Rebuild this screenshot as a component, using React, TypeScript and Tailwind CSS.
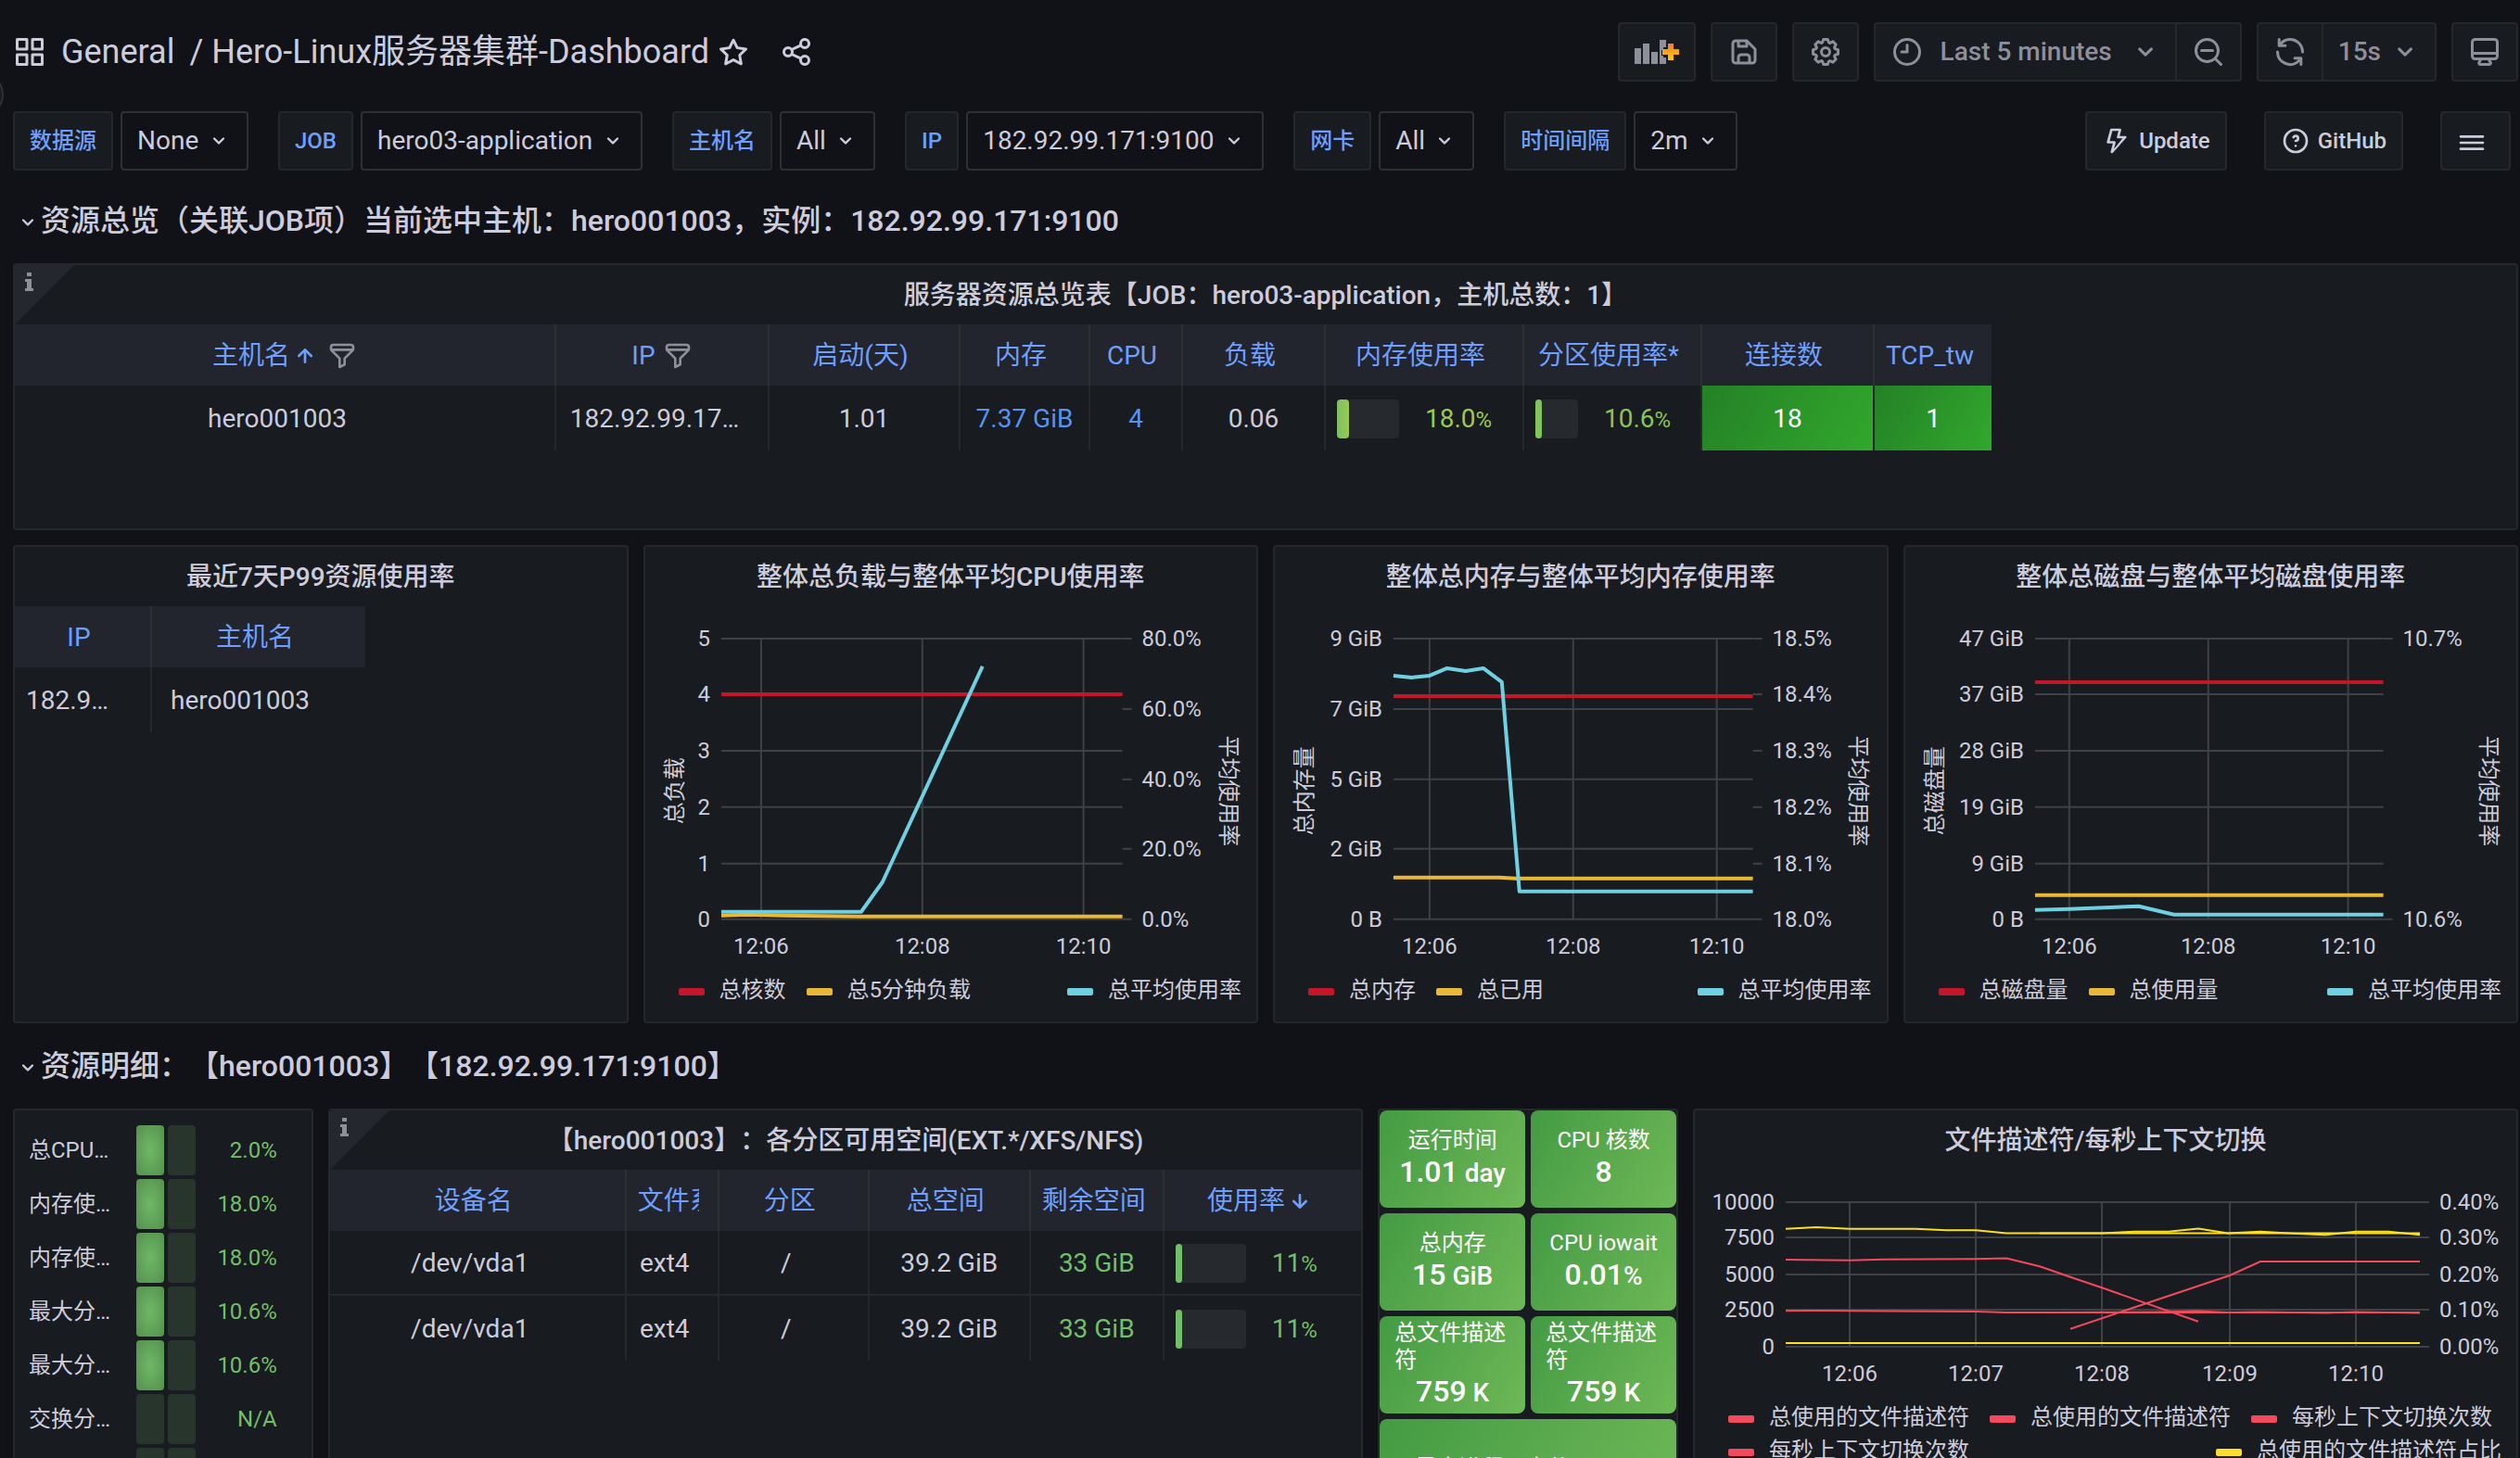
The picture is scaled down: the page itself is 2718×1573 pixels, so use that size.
import type { ReactNode } from "react";

const ICONS = {
  apps: "M10,13H3a1,1,0,0,0-1,1v7a1,1,0,0,0,1,1h7a1,1,0,0,0,1-1V14A1,1,0,0,0,10,13ZM9,20H4V15H9ZM21,2H14a1,1,0,0,0-1,1v7a1,1,0,0,0,1,1h7a1,1,0,0,0,1-1V3A1,1,0,0,0,21,2ZM20,9H15V4h5Zm1,4H14a1,1,0,0,0-1,1v7a1,1,0,0,0,1,1h7a1,1,0,0,0,1-1V14A1,1,0,0,0,21,13Zm-1,7H15V15h5ZM10,2H3A1,1,0,0,0,2,3v7a1,1,0,0,0,1,1h7a1,1,0,0,0,1-1V3A1,1,0,0,0,10,2ZM9,9H4V4H9Z",
  star: "M22,9.67A1,1,0,0,0,21.14,9l-5.69-.83L12.9,3a1,1,0,0,0-1.8,0L8.55,8.16,2.86,9a1,1,0,0,0-.81.68,1,1,0,0,0,.25,1l4.13,4-1,5.68A1,1,0,0,0,6.9,21.44L12,18.77l5.1,2.67a.93.93,0,0,0,.46.12,1,1,0,0,0,.59-.19,1,1,0,0,0,.4-1l-1-5.68,4.13-4A1,1,0,0,0,22,9.67Zm-6.15,4a1,1,0,0,0-.29.88l.72,4.2-3.76-2a1.06,1.06,0,0,0-.94,0l-3.76,2,.72-4.2a1,1,0,0,0-.29-.88l-3-3,4.21-.61a1,1,0,0,0,.76-.55L12,5.7l1.88,3.82a1,1,0,0,0,.76.55l4.21.61Z",
  share: "M18,14a4,4,0,0,0-3.08,1.48l-5.1-2.35a3.64,3.64,0,0,0,0-2.26l5.1-2.35A4,4,0,1,0,14,6a4.17,4.17,0,0,0,.07.71L8.79,9.14a4,4,0,1,0,0,5.72l5.28,2.43A4.17,4.17,0,0,0,14,18a4,4,0,1,0,4-4ZM18,4a2,2,0,1,1-2,2A2,2,0,0,1,18,4ZM6,14a2,2,0,1,1,2-2A2,2,0,0,1,6,14Zm12,6a2,2,0,1,1,2-2A2,2,0,0,1,18,20Z",
  save: "m20.71 9.29-6-6a1 1 0 0 0-.32-.21A1.09 1.09 0 0 0 14 3H6a3 3 0 0 0-3 3v12a3 3 0 0 0 3 3h12a3 3 0 0 0 3-3v-8a1 1 0 0 0-.29-.71ZM9 5h4v2H9Zm6 14H9v-3a1 1 0 0 1 1-1h4a1 1 0 0 1 1 1Zm4-1a1 1 0 0 1-1 1h-1v-3a3 3 0 0 0-3-3h-4a3 3 0 0 0-3 3v3H6a1 1 0 0 1-1-1V6a1 1 0 0 1 1-1h1v3a1 1 0 0 0 1 1h6a1 1 0 0 0 1-1V6.41l4 4Z",
  cog: "M21.32,9.55l-1.89-.63.89-1.78A1,1,0,0,0,20.13,6L18,3.87a1,1,0,0,0-1.15-.19l-1.78.89-.63-1.89A1,1,0,0,0,13.5,2h-3a1,1,0,0,0-.95.68L8.92,4.57,7.14,3.68A1,1,0,0,0,6,3.87L3.87,6a1,1,0,0,0-.19,1.15l.89,1.78-1.89.63A1,1,0,0,0,2,10.5v3a1,1,0,0,0,.68.95l1.89.63-.89,1.78A1,1,0,0,0,3.87,18L6,20.13a1,1,0,0,0,1.15.19l1.78-.89.63,1.89a1,1,0,0,0,.95.68h3a1,1,0,0,0,.95-.68l.63-1.89,1.78.89A1,1,0,0,0,18,20.13L20.13,18a1,1,0,0,0,.19-1.15l-.89-1.78,1.89-.63A1,1,0,0,0,22,13.5v-3A1,1,0,0,0,21.32,9.55ZM20,12.78l-1.2.4A2,2,0,0,0,17.64,16l.57,1.14-1.1,1.1L16,17.64a2,2,0,0,0-2.79,1.16l-.4,1.2H11.22l-.4-1.2A2,2,0,0,0,8,17.64l-1.14.57-1.1-1.1L6.36,16A2,2,0,0,0,5.2,13.18L4,12.78V11.22l1.2-.4A2,2,0,0,0,6.36,8L5.79,6.89l1.1-1.1L8,6.36A2,2,0,0,0,10.82,5.2l.4-1.2h1.56l.4,1.2A2,2,0,0,0,16,6.36l1.14-.57,1.1,1.1L17.64,8a2,2,0,0,0,1.16,2.79l1.2.4ZM12,8a4,4,0,1,0,4,4A4,4,0,0,0,12,8Zm0,6a2,2,0,1,1,2-2A2,2,0,0,1,12,14Z",
  clock: "M12,2A10,10,0,1,0,22,12,10,10,0,0,0,12,2Zm0,18a8,8,0,1,1,8-8A8,8,0,0,1,12,20ZM12,6a1,1,0,0,0-1,1v4H8a1,1,0,0,0,0,2h4a1,1,0,0,0,1-1V7A1,1,0,0,0,12,6Z",
  zoomOut: "M21.71,20.29,18,16.61A9,9,0,1,0,16.61,18l3.68,3.68a1,1,0,0,0,1.42,0A1,1,0,0,0,21.71,20.29ZM11,18a7,7,0,1,1,7-7A7,7,0,0,1,11,18Zm4-8H7a1,1,0,0,0,0,2h8a1,1,0,0,0,0-2Z",
  sync: "M19.91,15.51H15.38a1,1,0,0,0,0,2h2.4A8,8,0,0,1,4,12a1,1,0,0,0-2,0,10,10,0,0,0,16.88,7.23V21a1,1,0,0,0,2,0V16.5A1,1,0,0,0,19.91,15.51ZM12,2A10,10,0,0,0,5.12,4.77V3a1,1,0,0,0-2,0V7.5a1,1,0,0,0,1,1h4.5a1,1,0,0,0,0-2H6.22A8,8,0,0,1,20,12a1,1,0,0,0,2,0A10,10,0,0,0,12,2Z",
  monitor: "M19,2H5A3,3,0,0,0,2,5V15a3,3,0,0,0,3,3H7.64l-.58,1a2,2,0,0,0,0,2,2,2,0,0,0,1.75,1h6.46A2,2,0,0,0,17,21a2,2,0,0,0,0-2l-.59-1H19a3,3,0,0,0,3-3V5A3,3,0,0,0,19,2ZM8.77,20,10,18H14l1.2,2ZM20,15a1,1,0,0,1-1,1H5a1,1,0,0,1-1-1V14H20Zm0-3H4V5A1,1,0,0,1,5,4H19a1,1,0,0,1,1,1Z",
  bolt: "M19.87,8.6A1,1,0,0,0,19,8H14.42l1.27-4.74a1,1,0,0,0-.17-.87A1,1,0,0,0,14.72,2h-7a1,1,0,0,0-1,.74L4,12.74a1,1,0,0,0,.17.87,1,1,0,0,0,.8.39H8.89L7.08,20.74a1,1,0,0,0,1.71.93L19.7,9.63A1,1,0,0,0,19.87,8.6ZM9.79,18.61l1.36-5.1a1,1,0,0,0-.17-.86,1,1,0,0,0-.79-.4H6.35L8.49,4h4.92L12.15,8.75a1,1,0,0,0,1,1.25h3.57Z",
  question: "M11.29,15.29a1.58,1.58,0,0,0-.12.15.76.76,0,0,0-.09.18.64.64,0,0,0-.06.18,1.36,1.36,0,0,0,0,.2.84.84,0,0,0,.08.38.9.9,0,0,0,.54.54.94.94,0,0,0,.76,0,.9.9,0,0,0,.54-.54A1,1,0,0,0,13,16a1,1,0,0,0-.29-.71A1,1,0,0,0,11.29,15.29ZM12,2A10,10,0,1,0,22,12,10,10,0,0,0,12,2Zm0,18a8,8,0,1,1,8-8A8,8,0,0,1,12,20ZM12,7A3,3,0,0,0,9.4,8.5a1,1,0,1,0,1.73,1A1,1,0,0,1,12,9a1,1,0,0,1,0,2,1,1,0,1,0,0,2,3,3,0,0,0,0-6Z",
  bars: "M3,8H21a1,1,0,0,0,0-2H3A1,1,0,0,0,3,8Zm18,8H3a1,1,0,0,0,0,2H21a1,1,0,0,0,0-2Zm0-5H3a1,1,0,0,0,0,2H21a1,1,0,0,0,0-2Z",
  angleDown: "M17,9.17a1,1,0,0,0-1.41,0L12,12.71,8.46,9.17a1,1,0,0,0-1.41,0,1,1,0,0,0,0,1.42l4.24,4.24a1,1,0,0,0,1.42,0L17,10.59A1,1,0,0,0,17,9.17Z",
  arrowUp: "M17.71,11.29l-5-5a1,1,0,0,0-.33-.21,1,1,0,0,0-.76,0,1,1,0,0,0-.33.21l-5,5a1,1,0,0,0,1.42,1.42L11,9.41V17a1,1,0,0,0,2,0V9.41l3.29,3.3a1,1,0,0,0,1.42,0A1,1,0,0,0,17.71,11.29Z",
  filter: "M19,2H5A3,3,0,0,0,2,5V6.17a3,3,0,0,0,.25,1.2l0,.06a2.81,2.81,0,0,0,.59.86L9,14.41V21a1,1,0,0,0,.47.85A1,1,0,0,0,10,22a1,1,0,0,0,.45-.11l4-2A1,1,0,0,0,15,19V14.41l6.12-6.12a2.81,2.81,0,0,0,.59-.86l0-.06A3,3,0,0,0,22,6.17V5A3,3,0,0,0,19,2ZM13.29,13.29A1,1,0,0,0,13,14v4.38l-2,1V14a1,1,0,0,0-.29-.71L5.41,8H18.59ZM20,6H4V5A1,1,0,0,1,5,4H19a1,1,0,0,1,1,1Z",
};

function Icon({ name, className }: { name: keyof typeof ICONS; className: string }) {
  return (
    <svg viewBox="0 0 24 24" fill="currentColor" aria-hidden="true" className={`shrink-0 ${className}`}>
      <path d={ICONS[name]} />
    </svg>
  );
}

function PanelAddIcon() {
  return (
    <svg viewBox="0 0 48 28" aria-hidden="true" className="h-7 w-12 shrink-0">
      <defs>
        <linearGradient id="plus" x1="0" y1="0" x2="0" y2="1">
          <stop offset="0" stopColor="#f47b35" />
          <stop offset="1" stopColor="#fbca0a" />
        </linearGradient>
      </defs>
      <g fill="#8e8f9b">
        <rect x="0" y="10" width="7" height="17" />
        <rect x="9" y="5" width="7" height="22" />
        <rect x="18" y="14" width="7" height="13" />
        <path d="M27 1h7v8h-3v3h-2v6h2v2h3v7h-7z" />
      </g>
      <path d="M36 5h6v6h6v6h-6v6h-6v-6h-6v-6h6z" fill="url(#plus)" />
    </svg>
  );
}

const toolButton =
  "flex h-16 cursor-pointer items-center justify-center border-2 border-[#25272c] bg-[#181b1f] text-[#8e8f9b]";

function Toolbar() {
  return (
    <header className="flex items-center justify-between gap-8">
      <div className="flex items-center text-[36px] leading-[48px]">
        <Icon name="apps" className="size-9" />
        <a href="#general" className="ml-4">General</a>
        <h1 className="ml-4 whitespace-nowrap">/ Hero-Linux服务器集群-Dashboard</h1>
        <button type="button" aria-label="Mark as favorite" className="ml-2"><Icon name="star" className="size-9" /></button>
        <button type="button" aria-label="Share dashboard" className="ml-8"><Icon name="share" className="size-9" /></button>
      </div>
      <div className="flex gap-4 text-[28px] font-medium">
        <button type="button" aria-label="Add panel" className={`${toolButton} w-[84px] rounded-sm`}><PanelAddIcon /></button>
        <button type="button" aria-label="Save dashboard" className={`${toolButton} w-18 rounded-sm`}><Icon name="save" className="size-9" /></button>
        <button type="button" aria-label="Dashboard settings" className={`${toolButton} w-18 rounded-sm`}><Icon name="cog" className="size-9" /></button>
        <div className="flex">
          <button type="button" className={`${toolButton} gap-[18px] rounded-l-sm border-r-0 pr-3.5 pl-4`}>
            <Icon name="clock" className="size-9" />
            Last 5 minutes
            <Icon name="angleDown" className="size-9" />
          </button>
          <button type="button" aria-label="Zoom out time range" className={`${toolButton} w-18 rounded-r-sm`}><Icon name="zoomOut" className="size-9" /></button>
        </div>
        <div className="flex">
          <button type="button" aria-label="Refresh dashboard" className={`${toolButton} w-18 rounded-l-sm`}><Icon name="sync" className="size-9" /></button>
          <button type="button" className={`${toolButton} gap-2 rounded-r-sm border-l-0 pr-3.5 pl-4`}>
            15s
            <Icon name="angleDown" className="size-9" />
          </button>
        </div>
        <button type="button" aria-label="Cycle view mode" className={`${toolButton} w-18 rounded-sm`}><Icon name="monitor" className="size-9" /></button>
      </div>
    </header>
  );
}

const VARIABLES = [
  { id: "var-datasource", label: "数据源", value: "None" },
  { id: "var-job", label: "JOB", value: "hero03-application" },
  { id: "var-hostname", label: "主机名", value: "All" },
  { id: "var-ip", label: "IP", value: "182.92.99.171:9100" },
  { id: "var-device", label: "网卡", value: "All" },
  { id: "var-interval", label: "时间间隔", value: "2m" },
];

const linkBox =
  "flex h-16 items-center rounded-sm border-2 border-[#25272c] bg-[#181b1f] px-4 text-2xl font-medium";

function SubNav() {
  return (
    <nav className="mt-8 flex justify-between pr-2">
      <div className="flex gap-8">
        {VARIABLES.map((v) => (
          <div key={v.id} className="flex gap-2">
            <label htmlFor={v.id} className={`${linkBox} text-[#6e9fff]`}>{v.label}</label>
            <div className="grid h-16 items-center rounded-sm border-2 border-[#2e3036]">
              <select
                id={v.id}
                className="col-start-1 row-start-1 h-full appearance-none bg-transparent pr-[51px] pl-4 text-[28px]"
              >
                <option>{v.value}</option>
              </select>
              <Icon name="angleDown" className="pointer-events-none col-start-1 row-start-1 mr-4 size-7 justify-self-end" />
            </div>
          </div>
        ))}
      </div>
      <div className="flex gap-10">
        <a href="#update" className={`${linkBox} gap-2`}><Icon name="bolt" className="size-8" />Update</a>
        <a href="#github" className={`${linkBox} gap-2`}><Icon name="question" className="size-8" />GitHub</a>
        <button type="button" aria-label="Dashboard links" className={`${linkBox} w-[76px] pt-1`}><Icon name="bars" className="size-8" /></button>
      </div>
    </nav>
  );
}

function RowTitle({ children }: { children: ReactNode }) {
  return (
    <h2 className="col-span-24 h-15">
      <button type="button" className="flex h-full items-center pl-0.5 text-[32px] font-medium whitespace-nowrap">
        <Icon name="angleDown" className="mt-1 size-7" />
        {children}
      </button>
    </h2>
  );
}

function Panel({ title, info, className, children }: { title: string; info?: boolean; className: string; children: ReactNode }) {
  return (
    <section className={`relative overflow-hidden rounded-sm border-2 border-[#25272c] bg-[#181b1f] ${className}`}>
      {info && (
        <svg viewBox="0 0 64 64" aria-hidden="true" className="absolute top-0 left-0 size-16">
          <path d="M0 0h64L0 64z" fill="#24282e" />
          <path d="M13 8h5v4h-5zM11 15h7v10h2v3h-9v-3h2v-7h-2z" fill="#8e8f9b" />
        </svg>
      )}
      <h3 className="flex h-16 items-center justify-center pt-0.5 text-[28px] font-medium whitespace-nowrap">{title}</h3>
      {children}
    </section>
  );
}

const th = "h-[66px] overflow-hidden border-r-2 border-[#2e3036] bg-[#22252d] px-3 pt-0.5 font-normal whitespace-nowrap text-[#6e9fff] last:border-r-0";
const td = "h-[70px] overflow-hidden border-r-2 border-[#25272c] px-3 pt-0.5 text-center whitespace-nowrap last:border-r-0";

function Head({ children }: { children: ReactNode }) {
  return <th scope="col" className={th}><div className="overflow-hidden pr-2">{children}</div></th>;
}

function Gauge({ fill, width, tone, value }: { fill: string; width: string; tone: string; value: string }) {
  return (
    <div className={`flex items-center ${tone}`}>
      <div className={`h-[42px] rounded-sm bg-[#26292e] ${width}`}>
        <div className={`h-full rounded-sm ${fill}`} />
      </div>
      <span className="ml-7 text-[28px]">{value}<span className="text-2xl">%</span></span>
    </div>
  );
}

function OverviewPanel() {
  return (
    <Panel info title="服务器资源总览表【JOB：hero03-application，主机总数：1】" className="col-span-24 h-72">
      <table className="w-[2132px] table-fixed border-separate border-spacing-0 text-[28px]">
        <colgroup>
          <col className="w-[584px]" />
          <col className="w-[230px]" />
          <col className="w-[206px]" />
          <col className="w-[140px]" />
          <col className="w-[100px]" />
          <col className="w-[154px]" />
          <col className="w-[214px]" />
          <col className="w-[192px]" />
          <col className="w-[186px]" />
          <col className="w-[126px]" />
        </colgroup>
        <thead>
          <tr>
            <th scope="col" className={th}>
              <div className="flex items-center justify-center">
                主机名
                <Icon name="arrowUp" className="size-8" />
                <Icon name="filter" className="ml-2 size-8 text-[#8e8f9b]" />
              </div>
            </th>
            <th scope="col" className={th}>
              <div className="flex items-center justify-center gap-2">
                IP
                <Icon name="filter" className="size-8 text-[#8e8f9b]" />
              </div>
            </th>
            <Head>启动(天)</Head>
            <Head>内存</Head>
            <Head>CPU</Head>
            <Head>负载</Head>
            <Head>内存使用率</Head>
            <Head>分区使用率*</Head>
            <Head>连接数</Head>
            <Head>TCP_tw</Head>
          </tr>
        </thead>
        <tbody>
          <tr>
            <td className={td}><span className="pr-4">hero001003</span></td>
            <td className={td}><span className="pr-4">182.92.99.17…</span></td>
            <td className={td}>1.01</td>
            <td className={`${td} text-[#5794f2]`}>7.37 GiB</td>
            <td className={`${td} text-[#5794f2]`}>4</td>
            <td className={td}>0.06</td>
            <td className={td}><Gauge width="w-[67px]" fill="w-[13px] bg-linear-to-r from-[#7cc063] to-[#9ac94f]" tone="text-[#9fca4d]" value="18.0" /></td>
            <td className={td}><Gauge width="w-[46px]" fill="w-[7px] bg-[#82c45c]" tone="text-[#8cc555]" value="10.6" /></td>
            <td className={`${td} bg-linear-120 from-[#248126] to-[#31a82c] text-white`}>18</td>
            <td className={`${td} bg-linear-120 from-[#248126] to-[#31a82c] text-white`}>1</td>
          </tr>
        </tbody>
      </table>
    </Panel>
  );
}

type Tick = [number, string];
type Series = { color: string; points: string };
type PlotProps = {
  label: string;
  width: number;
  height: number;
  left: number;
  right: number;
  top: number;
  bottom: number;
  leftTicks: Tick[];
  rightTicks: Tick[];
  xTicks: Tick[];
  leftTitle?: string;
  rightTitle?: string;
  series: Series[];
  stroke: number;
};

const GRID = "#404144";

function Plot(p: PlotProps) {
  const mid = (p.top + p.bottom) / 2 + 13;
  return (
    <svg viewBox={`0 0 ${p.width} ${p.height}`} role="img" aria-label={p.label} fill="#ccccdc" className="block w-full text-2xl">
      <g stroke={GRID} strokeWidth="2">
        {p.leftTicks.map(([y]) => <line key={y} x1={p.left} x2={p.right} y1={y} y2={y} />)}
        {p.rightTicks.map(([y]) => <line key={y} x1={p.right} x2={p.right + 10} y1={y} y2={y} />)}
        {p.xTicks.map(([x]) => <line key={x} x1={x} x2={x} y1={p.top} y2={p.bottom} />)}
      </g>
      <g textAnchor="end">
        {p.leftTicks.map(([y, t]) => <text key={y} x={p.left - 12} y={y + 8}>{t}</text>)}
      </g>
      {p.rightTicks.map(([y, t]) => <text key={y} x={p.right + 21} y={y + 8}>{t}</text>)}
      <g textAnchor="middle">
        {p.xTicks.map(([x, t]) => <text key={x} x={x} y={p.bottom + 37}>{t}</text>)}
        {p.leftTitle && <text transform={`translate(32 ${mid}) rotate(-90)`} dominantBaseline="central">{p.leftTitle}</text>}
        {p.rightTitle && <text transform={`translate(629 ${mid}) rotate(90)`} dominantBaseline="central">{p.rightTitle}</text>}
      </g>
      <g fill="none" strokeWidth={p.stroke} strokeLinejoin="round">
        {p.series.map((s, i) => <polyline key={i} stroke={s.color} points={s.points} />)}
      </g>
    </svg>
  );
}

const SWATCH = {
  red: "bg-[#c4162a]",
  amber: "bg-[#eab839]",
  cyan: "bg-[#6ed0e0]",
  pink: "bg-[#f2495c]",
  yellow: "bg-[#fade2a]",
};

type LegendItem = [keyof typeof SWATCH, string];

function Legend({ left, right }: { left: LegendItem[]; right: LegendItem[] }) {
  const item = ([tone, name]: LegendItem, i: number) => (
    <li key={i} className="flex items-center gap-4">
      <span className={`mt-1 h-2 w-7 rounded-xs ${SWATCH[tone]}`} />
      {name}
    </li>
  );
  return (
    <div className="flex flex-wrap justify-between pr-4 pl-9 text-2xl leading-9 whitespace-nowrap">
      <ul className="flex flex-wrap gap-x-[22px]">{left.map(item)}</ul>
      <ul className="ml-auto flex gap-x-[22px]">{right.map(item)}</ul>
    </div>
  );
}

const SIX = [35, 95, 156, 217, 278, 338];
const FIVE = [35, 111, 187, 262, 338];
const ticks = (ys: number[], names: string[]): Tick[] => ys.map((y, i) => [y, names[i]]);

const RED = "#c4162a";
const AMBER = "#eab839";
const CYAN = "#6ed0e0";

const FRAME = { width: 660, height: 396, top: 35, bottom: 338, stroke: 4, rightTitle: "平均使用率" };

const chartPanel = "col-span-6 h-[516px]";

function OverviewCharts() {
  return (
    <>
      <Panel title="最近7天P99资源使用率" className={chartPanel}>
        <table className="w-[378px] table-fixed border-separate border-spacing-0 text-[28px]">
          <colgroup>
            <col className="w-[148px]" />
            <col className="w-[230px]" />
          </colgroup>
          <thead>
            <tr><Head>IP</Head><Head>主机名</Head></tr>
          </thead>
          <tbody>
            <tr>
              <td className={`${td} text-left`}>182.9…</td>
              <td className={td}><span className="pr-10">hero001003</span></td>
            </tr>
          </tbody>
        </table>
      </Panel>
      <Panel title="整体总负载与整体平均CPU使用率" className={chartPanel}>
        <Plot
          {...FRAME}
          label="整体总负载与整体平均CPU使用率"
          left={82}
          right={515}
          leftTicks={ticks(SIX, ["5", "4", "3", "2", "1", "0"])}
          rightTicks={ticks(FIVE, ["80.0%", "60.0%", "40.0%", "20.0%", "0.0%"])}
          xTicks={[[125, "12:06"], [299, "12:08"], [473, "12:10"]]}
          leftTitle="总负载"
          series={[
            { color: RED, points: "82,95 515,95" },
            { color: AMBER, points: "82,334 110,333 150,334 232,335 515,335" },
            { color: CYAN, points: "82,330 233,330 256,298 364,65" },
          ]}
        />
        <Legend left={[["red", "总核数"], ["amber", "总5分钟负载"]]} right={[["cyan", "总平均使用率"]]} />
      </Panel>
      <Panel title="整体总内存与整体平均内存使用率" className={chartPanel}>
        <Plot
          {...FRAME}
          label="整体总内存与整体平均内存使用率"
          left={128}
          right={516}
          leftTicks={ticks(FIVE, ["9 GiB", "7 GiB", "5 GiB", "2 GiB", "0 B"])}
          rightTicks={ticks(SIX, ["18.5%", "18.4%", "18.3%", "18.2%", "18.1%", "18.0%"])}
          xTicks={[[167, "12:06"], [322, "12:08"], [477, "12:10"]]}
          leftTitle="总内存量"
          series={[
            { color: RED, points: "128,97 516,97" },
            { color: AMBER, points: "128,293 243,293 260,294 516,294" },
            { color: CYAN, points: "128,75 148,77 167,75 186,67 206,70 225,67 245,82 264,308 516,308" },
          ]}
        />
        <Legend left={[["red", "总内存"], ["amber", "总已用"]]} right={[["cyan", "总平均使用率"]]} />
      </Panel>
      <Panel title="整体总磁盘与整体平均磁盘使用率" className={chartPanel}>
        <Plot
          {...FRAME}
          label="整体总磁盘与整体平均磁盘使用率"
          left={140}
          right={516}
          leftTicks={ticks(SIX, ["47 GiB", "37 GiB", "28 GiB", "19 GiB", "9 GiB", "0 B"])}
          rightTicks={[[35, "10.7%"], [338, "10.6%"]]}
          xTicks={[[177, "12:06"], [327, "12:08"], [478, "12:10"]]}
          leftTitle="总磁盘量"
          series={[
            { color: RED, points: "140,82 516,82" },
            { color: AMBER, points: "140,312 516,312" },
            { color: CYAN, points: "140,328 177,327 252,324 290,333 516,333" },
          ]}
        />
        <Legend left={[["red", "总磁盘量"], ["amber", "总使用量"]]} right={[["cyan", "总平均使用率"]]} />
      </Panel>
    </>
  );
}

const USAGE: [string, string, boolean][] = [
  ["总CPU…", "2.0%", true],
  ["内存使…", "18.0%", true],
  ["内存使…", "18.0%", true],
  ["最大分…", "10.6%", true],
  ["最大分…", "10.6%", true],
  ["交换分…", "N/A", false],
  ["交换分…", "N/A", false],
];

function UsagePanel() {
  return (
    <section className="col-span-3 rounded-sm border-2 border-[#25272c] bg-[#181b1f] py-4 pr-[37px] pl-[15px] text-2xl">
      <ul className="flex flex-col gap-1">
        {USAGE.map(([name, value, lit], i) => (
          <li key={i} className="flex h-[54px] items-center gap-1">
            <span className="w-24 whitespace-nowrap">{name}</span>
            <span className={lit
              ? "ml-4 h-full w-[30px] rounded-sm bg-[radial-gradient(#6fb866,#54904e)]"
              : "ml-4 h-full w-[30px] rounded-sm bg-[#28352c]"} />
            <span className="h-full w-[30px] rounded-sm bg-[#28352c]" />
            <span className="flex-1 text-right text-[#73bf69]">{value}</span>
          </li>
        ))}
      </ul>
    </section>
  );
}

function PartitionPanel() {
  const rows = ["b-0", "b-1"];
  const cell = `${td} border-b-2`;
  return (
    <Panel info title="【hero001003】：各分区可用空间(EXT.*/XFS/NFS)" className="col-span-10">
      <table className="w-full table-fixed border-separate border-spacing-0 text-[28px]">
        <colgroup>
          <col className="w-[320px]" />
          <col className="w-[100px]" />
          <col className="w-[162px]" />
          <col className="w-[174px]" />
          <col className="w-[144px]" />
          <col />
        </colgroup>
        <thead>
          <tr>
            <Head>设备名</Head>
            <th scope="col" className={th}><div className="mr-2 overflow-hidden text-left">文件系统</div></th>
            <Head>分区</Head>
            <Head>总空间</Head>
            <th scope="col" className={th}><div className="mr-1 overflow-hidden text-left">剩余空间</div></th>
            <th scope="col" className={th}>
              <div className="flex items-center justify-center pr-1">
                使用率
                <Icon name="arrowUp" className="size-8 rotate-180" />
              </div>
            </th>
          </tr>
        </thead>
        <tbody>
          {rows.map((id) => (
            <tr key={id} className="[&:last-child>td]:border-b-0">
              <td className={cell}><span className="pr-4">/dev/vda1</span></td>
              <td className={cell}><span className="pr-4">ext4</span></td>
              <td className={cell}><span className="pr-4">/</span></td>
              <td className={cell}>39.2 GiB</td>
              <td className={`${cell} text-[#73bf69]`}>33 GiB</td>
              <td className={cell}><Gauge width="w-[76px]" fill="w-[7px] bg-[#73bf69]" tone="text-[#73bf69]" value="11" /></td>
            </tr>
          ))}
        </tbody>
      </table>
    </Panel>
  );
}

const STATS: [string, string, string][] = [
  ["运行时间", "1.01", " day"],
  ["CPU 核数", "8", ""],
  ["总内存", "15", " GiB"],
  ["CPU iowait", "0.01", "%"],
  ["总文件描述符", "759", " K"],
  ["总文件描述符", "759", " K"],
];

const tile = "flex h-[105px] items-center justify-center rounded-lg bg-linear-120 from-[#439b43] to-[#6eb857] text-white";

function StatsPanel() {
  return (
    <section className="col-span-3 overflow-hidden rounded-sm border-2 border-[#25272c] bg-[#181b1f]">
      <div className="grid grid-cols-2 gap-1.5">
        {STATS.map(([name, value, unit], i) => (
          <div key={i} className={`${tile} flex-col px-4`}>
            <div className="text-2xl leading-[29px]">{name}</div>
            <div className="text-[32px] leading-[38px] font-medium whitespace-pre">
              {value}<span className="text-[28px]">{unit}</span>
            </div>
          </div>
        ))}
        <div className={`${tile} col-span-2 gap-2 text-2xl`}>
          <span>最大进程可文件</span>
          <span className="font-medium">15.5 K</span>
        </div>
      </div>
    </section>
  );
}

const PINK = "#f2495c";
const YELLOW = "#fade2a";

function DescriptorPanel() {
  return (
    <Panel title="文件描述符/每秒上下文切换" className="col-span-8">
      <Plot
        label="文件描述符/每秒上下文切换"
        width={886}
        height={249}
        left={98}
        right={782}
        top={35}
        bottom={191}
        stroke={2}
        leftTicks={ticks([35, 73, 113, 151, 191], ["10000", "7500", "5000", "2500", "0"])}
        rightTicks={ticks([35, 73, 113, 151, 191], ["0.40%", "0.30%", "0.20%", "0.10%", "0.00%"])}
        xTicks={[[167, "12:06"], [303, "12:07"], [439, "12:08"], [577, "12:09"], [713, "12:10"]]}
        series={[
          { color: PINK, points: "98,152.3 131,152 303,153 336,154 782,154" },
          { color: PINK, points: "372,154 499,153.5 543,152.5 575,154 610,153.5 680,154.5 713,153.5 782,154.5" },
          { color: PINK, points: "98,97 167,97.7 203,96.7 303,96.3 336,95.5 372,104.3 405,115.7 439,127.3 543,163.7" },
          { color: PINK, points: "405,171.7 577,114 610,99 782,99" },
          { color: YELLOW, points: "98,187 782,187" },
          { color: YELLOW, points: "98,63.7 131,62 167,63.7 238,63.7 271,65.3 303,65.3 336,68.5 782,68.5" },
          { color: YELLOW, points: "372,68.5 439,68.5 475,66.7 511,66.7 543,63.5 575,68.5 610,66.7 645,68.7 680,70.3 713,66.7 748,66.7 782,70.3" },
        ]}
      />
      <Legend
        left={[["pink", "总使用的文件描述符"], ["pink", "总使用的文件描述符"], ["pink", "每秒上下文切换次数"]]}
        right={[]}
      />
      <Legend left={[["pink", "每秒上下文切换次数"]]} right={[["yellow", "总使用的文件描述符占比"]]} />
    </Panel>
  );
}

export default function App() {
  return (
    <div className="relative h-screen overflow-hidden bg-[#111217] pt-6 pr-0.5 pl-3.5 font-[Roboto,'Noto_Sans_CJK_SC',sans-serif] text-[#ccccdc] [text-spacing-trim:space-all]">
      <button
        type="button"
        aria-label="Expand menu"
        className="absolute top-[78px] -left-11 size-12 rounded-full border-2 border-[#2e3036] bg-[#181b1f]"
      />
      <Toolbar />
      <SubNav />
      <main className="mt-6 grid grid-cols-24 gap-4">
        <RowTitle>资源总览（关联JOB项）当前选中主机：hero001003，实例：182.92.99.171:9100</RowTitle>
        <OverviewPanel />
        <OverviewCharts />
        <RowTitle>资源明细：【hero001003】【182.92.99.171:9100】</RowTitle>
        <UsagePanel />
        <PartitionPanel />
        <StatsPanel />
        <DescriptorPanel />
      </main>
    </div>
  );
}
